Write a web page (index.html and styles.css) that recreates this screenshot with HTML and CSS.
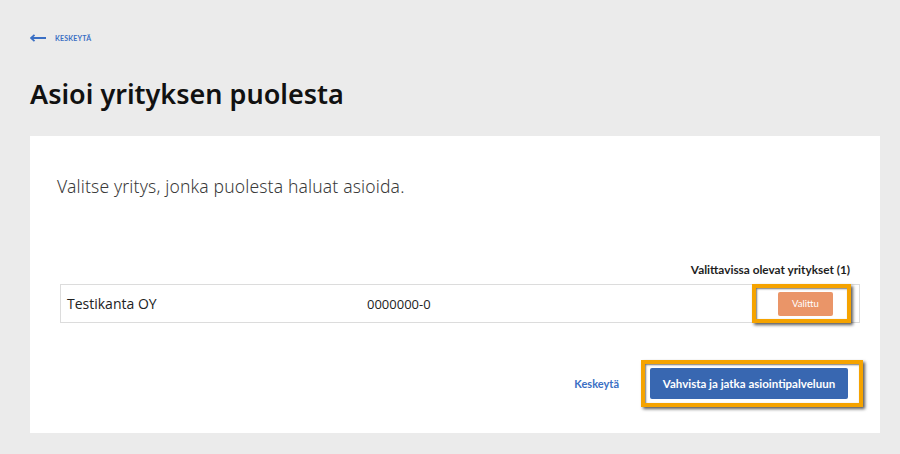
FILE: index.html
```html
<!DOCTYPE html>
<html lang="fi">
<head>
<meta charset="utf-8">
<link rel="stylesheet" href="styles.css">
</head>
<body>
<div class="page">
  <a class="back" href="#">
    <svg class="back-icon" width="16" height="8" viewBox="0 0 16 8"><path d="M1 4H16M4.5 0.8L1 4L4.5 7.2" fill="none" stroke="#3a6fc4" stroke-width="1.8"/></svg>
    <span>KESKEYTÄ</span>
  </a>
  <h1 class="title">Asioi yrityksen puolesta</h1>
  <div class="card">
    <p class="intro">Valitse yritys, jonka puolesta haluat asioida.</p>
    <div class="list-label">Valittavissa olevat yritykset (1)</div>
    <div class="company-row">
      <span class="company-name">Testikanta OY</span>
      <span class="company-id">0000000-0</span>
      <span class="hl hl-small"><button class="btn-selected">Valittu</button></span>
    </div>
    <div class="actions">
      <a class="cancel" href="#">Keskeytä</a>
      <span class="hl hl-big"><button class="btn-primary">Vahvista ja jatka asiointipalveluun</button></span>
    </div>
  </div>
</div>
</body>
</html>
```
FILE: styles.css
```css
html, body {
  margin: 0;
  padding: 0;
  background: #ebebeb;
}
body {
  font-family: "Source Sans Pro", Lato, "Noto Sans", sans-serif;
  color: #1e1e1e;
  width: 900px;
  height: 454px;
  overflow: hidden;
}
.page {
  padding: 32px 20px 0 30px;
}
.back {
  display: flex;
  align-items: center;
  gap: 9px;
  height: 12px;
  color: #3a6fc4;
  text-decoration: none;
  font-size: 7px;
  font-weight: 700;
  letter-spacing: 0.2px;
}
.back-icon {
  display: block;
}
.title {
  margin: 32px 0 0 0;
  font-family: "Noto Sans", sans-serif;
  font-size: 27px;
  font-weight: 600;
  line-height: 36px;
  height: 36px;
  color: #111;
}
.card {
  margin-top: 24px;
  background: #fff;
  height: 297px;
  padding: 0 20px 0 27px;
  box-sizing: border-box;
}
.intro {
  margin: 0;
  padding-top: 38px;
  height: 24px;
  line-height: 24px;
  font-family: "Noto Sans", sans-serif;
  font-size: 17.5px;
  font-weight: 300;
  color: #3a3a3a;
  letter-spacing: 0.15px;
}
.list-label {
  margin-top: 64px;
  text-align: right;
  font-size: 11.8px;
  font-weight: 700;
  line-height: 16px;
  height: 16px;
  padding-right: 10px;
  color: #1e1e1e;
}
.company-row {
  margin: 6px 0 0 3px;
  height: 39px;
  box-sizing: border-box;
  border: 1px solid #dcdcdc;
  display: flex;
  align-items: center;
  padding-left: 6px;
}
.company-name {
  font-family: "Open Sans", sans-serif;
  font-size: 14px;
  width: 300px;
  color: #222;
}
.company-id {
  font-family: "Open Sans", sans-serif;
  font-size: 13px;
  color: #222;
  flex: 1;
}
.hl {
  display: flex;
  align-items: center;
  border: 4px solid #f5a300;
  box-shadow: 2px 2px 3px rgba(0,0,0,0.65), inset 1px 1px 2px rgba(0,0,0,0.55);
  box-sizing: border-box;
}
.hl-small {
  width: 99px;
  height: 39px;
  padding: 0 14px 0 22px;
  margin-right: 8px;
}
.btn-selected {
  width: 58px;
  height: 24px;
  border: 0;
  border-radius: 2px;
  background: #ea9568;
  color: #fff;
  font-family: inherit;
  font-size: 9.5px;
  padding: 0;
}
.actions {
  margin-top: 37px;
  display: flex;
  align-items: center;
  justify-content: flex-end;
  margin-right: -3px;
}
.cancel {
  color: #3a6fc4;
  text-decoration: none;
  font-size: 11px;
  font-weight: 700;
  margin-right: 22px;
}
.hl-big {
  width: 222px;
  height: 47px;
  padding: 0 11px 0 5px;
}
.btn-primary {
  width: 199px;
  height: 31px;
  border: 0;
  border-radius: 2px;
  background: #3867b1;
  color: #fff;
  font-family: inherit;
  font-size: 11.5px;
  font-weight: 700;
  padding: 0;
}
```
